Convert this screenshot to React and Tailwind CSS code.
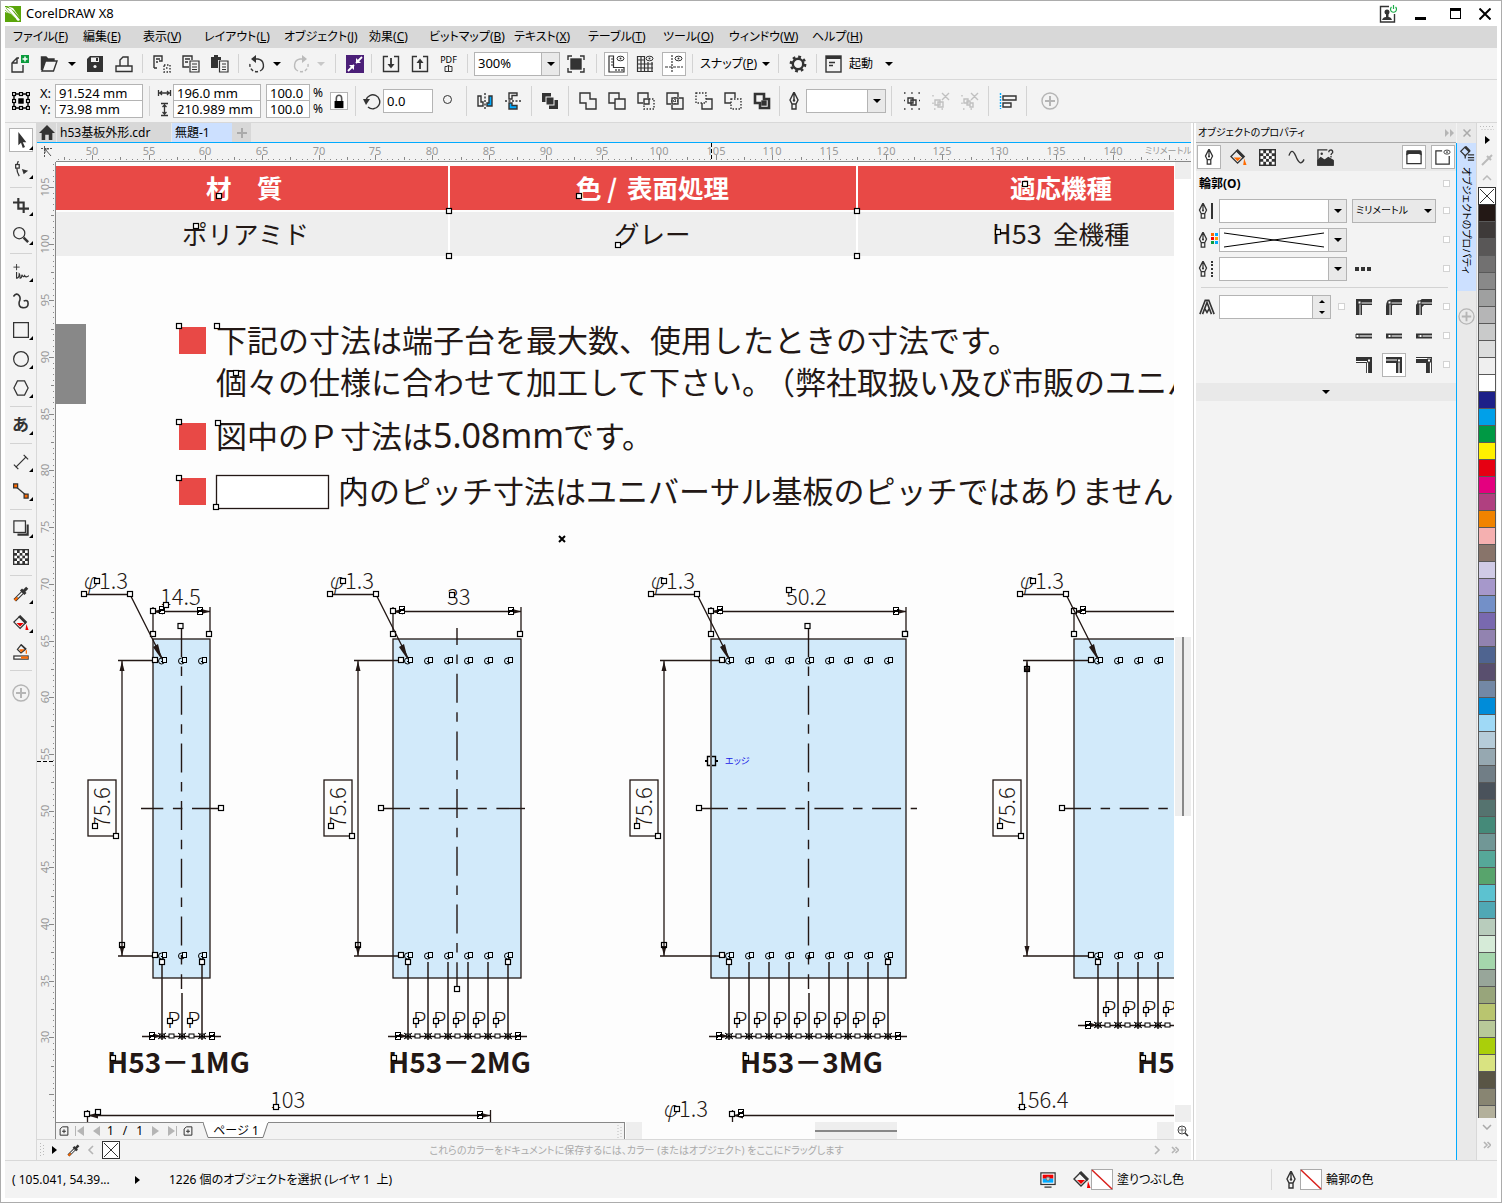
import React from 'react';
import { clsx } from 'clsx';

/* ---------- icons, all on an 18 x 18 grid ---------- */

const Svg = ({ children, className = 'size-[18px]' }) => (
  <svg
    viewBox="0 0 18 18"
    className={clsx('shrink-0', className)}
    fill="none"
    stroke="#333"
    strokeWidth="1.4"
    aria-hidden="true"
  >
    {children}
  </svg>
);

const nib = (
  <>
    <path d="M9 0 L5 8 L7 12 H11 L13 8 Z M9 1 V8 M7 12 V17 H11 V12" />
    <circle cx="9" cy="8.5" r="1.2" fill="#333" stroke="none" />
  </>
);

const eye = (
  <>
    <ellipse cx="13.5" cy="3.5" rx="3.5" ry="2.3" strokeWidth="1" />
    <circle cx="13.5" cy="3.5" r="1" fill="#333" stroke="none" />
  </>
);

const checker = (
  <>
    <rect x="0" y="0" width="18" height="18" fill="#333" stroke="none" />
    {[0, 1, 2, 3, 4].map((r) =>
      [0, 1, 2, 3, 4].map((c) =>
        (r + c) % 2 === 0 ? (
          <rect key={`${r}-${c}`} x={1.5 + c * 3} y={1.5 + r * 3} width="3" height="3" fill="#fff" stroke="none" />
        ) : null
      )
    )}
  </>
);

const bucket = (color) => (
  <>
    <path d="M7 2 L14 9 L8 15 L1 8 Z" />
    <path d="M7 1 L15 9" strokeWidth="3" />
    <path d="M4 9 H12 L8 13 Z" fill={color} stroke="none" />
    <path d="M15 10 L17.5 17 H14 Z" fill={color} stroke="none" />
  </>
);

const icons = {
  newDoc: (
    <>
      <path d="M8 3 H6 L1 8 V17 H12 V10 M6 3 V8 H1" />
      <rect x="10" y="0" width="8" height="8" fill="#0a9b3c" stroke="none" />
      <path d="M14 1.5 V6.5 M11.5 4 H16.5" stroke="#fff" />
    </>
  ),
  open: (
    <>
      <path d="M1.5 15 V2 H6 L8 4 H14 V6" fill="#333" />
      <path d="M2 16 L5.5 6 H17 L13.5 16 Z" fill="#f3f3f3" />
    </>
  ),
  save: (
    <>
      <path d="M1 4 L4 1 H17 V17 H1 Z" fill="#333" stroke="none" />
      <rect x="5" y="2.5" width="8" height="4.5" fill="#f3f3f3" stroke="none" />
      <rect x="10" y="3" width="2" height="3" fill="#333" stroke="none" />
      <circle cx="9" cy="11.5" r="1.6" fill="#f3f3f3" stroke="none" />
    </>
  ),
  print: <path d="M5 11 V5 L8 2 H13 V11 M1 16.5 V11 H17 V16.5 Z" />,
  cut: (
    <>
      <path d="M1 13 V1 H9 V6 H6 M3 4 H7 M3 7 H5 M1 13 H4" />
      <path d="M11 10 H17 V17 H11 Z M13 13 H15" strokeDasharray="1.5 1.5" />
    </>
  ),
  copy: (
    <>
      <path d="M7 12 H1 V1 H10 V5 M3 4 H8 M3 7 H6" />
      <path d="M8 6 H17 V17 H8 Z M10 9 H15 M10 12 H15 M10 14.5 H15" strokeWidth="1.2" />
    </>
  ),
  paste: (
    <>
      <path d="M0 2 H3 V0 H7 V2 H10 V5 H7 V13 H0 Z" fill="#333" stroke="none" />
      <path d="M8.5 6 H17 V17 H8.5 Z M11 9 H15 M11 12 H15 M11 14.5 H15" strokeWidth="1.2" />
    </>
  ),
  undo: (
    <>
      <path d="M6 4 H10 A6.4 6.4 0 0 1 12 16" />
      <path d="M8 0 V8 L3 4 Z" fill="#333" stroke="none" />
      <path d="M10 16.5 A6.5 6.5 0 0 1 2 9" strokeDasharray="3 2" />
    </>
  ),
  redo: (
    <g stroke="#bbb">
      <path d="M12 4 H8 A6.4 6.4 0 0 0 6 16" />
      <path d="M10 0 V8 L15 4 Z" fill="#bbb" stroke="none" />
      <path d="M8 16.5 A6.5 6.5 0 0 0 16 9" strokeDasharray="3 2" />
    </g>
  ),
  connect: (
    <>
      <rect width="18" height="18" fill="#4b1f78" stroke="none" />
      <path d="M16 2 L10 8 M2 16 L8 10" stroke="#fff" strokeWidth="1.8" />
      <path d="M10 3 V8 H15 Z M3 10 H8 V15 Z" fill="#fff" stroke="none" />
    </>
  ),
  importFile: (
    <>
      <path d="M6 1.5 H1.5 V16.5 H16.5 V1.5 H12" />
      <path d="M9 3 V11" strokeWidth="1.8" />
      <path d="M5.5 9 H12.5 L9 13.5 Z" fill="#333" stroke="none" />
    </>
  ),
  exportFile: (
    <>
      <path d="M6 1.5 H1.5 V16.5 H16.5 V1.5 H12" />
      <path d="M9 6 V14" strokeWidth="1.8" />
      <path d="M5.5 8 H12.5 L9 3.5 Z" fill="#333" stroke="none" />
    </>
  ),
  fullScreen: (
    <>
      <rect x="4" y="4" width="10" height="10" fill="#333" />
      <path d="M1 5 V1 H5 M13 1 H17 V5 M17 13 V17 H13 M5 17 H1 V13" />
    </>
  ),
  rulers: (
    <>
      <path d="M2 1 V17 H17 V12.5 H6.500 V1 Z M4 4 H6 M4 7 H6 M4 10 H6 M9 14 V16 M12 14 V16 M15 14 V16" strokeWidth="1.2" />
      {eye}
    </>
  ),
  grid: (
    <>
      <path d="M1.5 1 V17 M5 1 V17 M8.5 1 V17 M12 7 V17 M16 7 V17 M1 1.5 H9 M1 5 H9 M1 9 H17 M1 13 H17 M1 16.5 H17" strokeWidth="1.2" />
      {eye}
    </>
  ),
  guides: (
    <>
      <path d="M7 0 V18" strokeDasharray="2 1" strokeWidth="1.2" />
      <path d="M0 12 H18" strokeDasharray="3 1" strokeWidth="1.2" />
      {eye}
    </>
  ),
  gear: (
    <>
      <circle cx="9" cy="9" r="5.2" strokeWidth="2.4" />
      <circle cx="9" cy="9" r="7.2" strokeWidth="2.4" strokeDasharray="2.8 2.85" />
    </>
  ),
  launch: (
    <>
      <rect x="1" y="1" width="15" height="16" />
      <path d="M1 2.5 H16" strokeWidth="3" />
      <path d="M4 7.5 H10 M4 10.5 H8" />
    </>
  ),
  origin: (
    <>
      {[2, 9, 16].map((x) =>
        [2, 9, 16].map((y) => (
          <rect key={`${x}-${y}`} x={x - 1.5} y={y - 1.5} width="3" height="3" stroke="#000" strokeWidth="1.2" />
        ))
      )}
      <rect x="7" y="7" width="4" height="4" fill="#000" stroke="#000" />
      <path d="M4 2 H7 M11 2 H14 M4 16 H7 M11 16 H14 M2 4 V7 M2 11 V14 M16 4 V7 M16 11 V14" stroke="#000" />
    </>
  ),
  lock: (
    <>
      <rect x="4" y="9" width="10" height="8" fill="#000" stroke="none" />
      <path d="M6 9 V6 A3 3.5 0 0 1 12 6 V9" stroke="#555" strokeWidth="1.8" />
    </>
  ),
  rotate: (
    <>
      <path d="M5 15 A7 7 0 1 0 3 8" />
      <path d="M0 7 H7 L3 13 Z" fill="#333" stroke="none" />
    </>
  ),
  mirrorH: (
    <>
      <path d="M2 4 H5 V10 H7 V14 H2 Z" />
      <path d="M9 1 V17" strokeDasharray="2 1.500" />
      <path d="M13 4 H16 V14 H11 V11 H13 Z" fill="#0af" />
    </>
  ),
  mirrorV: (
    <>
      <path d="M5 1 H13 V3.500 H8 V7 H5 Z" />
      <path d="M1 9 H17" strokeDasharray="2 1.500" />
      <path d="M5 11 H8 V13.500 H13 V17 H5 Z" fill="#0af" />
    </>
  ),
  order: (
    <>
      <rect x="1" y="1" width="9" height="9" fill="#333" stroke="none" />
      <rect x="8" y="8" width="9" height="9" fill="#333" stroke="none" />
      <rect x="5" y="5" width="8" height="8" fill="#333" stroke="#f3f3f3" strokeWidth="1" />
    </>
  ),
  weld: <path d="M1 1 H11 V7 H17 V17 H7 V11 H1 Z" />,
  trim: <path d="M11 7 V1 H1 V11 H7 M7 7 H17 V17 H7 Z" />,
  intersect: (
    <>
      <path d="M11 6 V1 H1 V11 H6 M7 7 H12 V12 H7 Z" />
      <path d="M12 7 H17 V17 H7 V12" strokeDasharray="1.5 1.5" />
    </>
  ),
  simplify: (
    <>
      <path d="M12 5 V1 H1 V12 H5 M13 6 H17 V17 H6 V13" />
      <rect x="6" y="6" width="6" height="6" />
      <path d="M9 5 V12 M5 9 H12" strokeDasharray="1 1" />
    </>
  ),
  frontMinus: (
    <>
      <path d="M11 7 H17 V17 H7 V11" />
      <path d="M1 1 H11 V11 H1 Z" strokeDasharray="1.5 1.5" />
    </>
  ),
  backMinus: (
    <>
      <path d="M7 11 H1 V1 H11 V6" />
      <path d="M7 7 H17 V17 H7 Z" strokeDasharray="1.5 1.5" />
    </>
  ),
  boundary: (
    <>
      <path d="M2 2 H11 V7 H16 V16 H7 V11 H2 Z" strokeWidth="2.6" />
      <rect x="9" y="9" width="4" height="4" fill="#333" />
    </>
  ),
  nib,
  group: (
    <>
      <path d="M5 6 H10 V11 H5 Z M8 8 H13 V13 H8 Z" />
      <path d="M1 1 H17 M1 17 H17 M1 8.5 H2 M16 8.5 H17" strokeDasharray="1.5 5.7" />
    </>
  ),
  ungroup: (
    <g stroke="#c0c0c0">
      <path d="M3 8 H8 V13 H3 Z M6 10 H11 V15 H6 Z M10 1 L17 8 M17 1 L10 8" />
      <path d="M1 3 V17 H17" strokeDasharray="1.5 6" />
    </g>
  ),
  ungroupAll: (
    <g stroke="#c0c0c0">
      <path d="M3 7 H7 V11 H3 Z M6 9 H9 V13 H6 Z M9 11 H12 V15 H9 Z M10 1 L17 8 M17 1 L10 8" />
      <path d="M1 3 V17 H17" strokeDasharray="1.5 6" />
    </g>
  ),
  align: (
    <>
      <path d="M1.5 1 V17" stroke="#0af" strokeDasharray="2 1" />
      <path d="M4 4 H17 V8 H4 Z M4 11 H12 V15 H4 Z" />
    </>
  ),
  plus: (
    <g stroke="#b5b5b5">
      <circle cx="9" cy="9" r="8" />
      <path d="M9 4 V14 M4 9 H14" strokeWidth="2" />
    </g>
  ),
  pick: <path d="M6 0 V15 L9 12 L11 18 L13.500 17 L11 11.500 H15 Z" fill="#333" stroke="none" />,
  shape: (
    <>
      <path d="M6 0 Q2 8 7 17" />
      <rect x="3" y="4" width="4" height="4" fill="#fff" />
      <path d="M10 9 L17 11 L12 15 Z" fill="#333" stroke="none" />
    </>
  ),
  crop: <path d="M0 5 H12 V17 M6 0 V12 H18" strokeWidth="2.4" />,
  zoom: (
    <>
      <circle cx="7" cy="7" r="6.3" />
      <path d="M12 12 L17 17" strokeWidth="2.8" />
    </>
  ),
  freehand: (
    <>
      <path d="M4 0 V7 M0.5 3.5 H7.500" strokeWidth="1" />
      <path d="M4 9 V16 Q7 16 7 11 Q8 12 8 16 Q10 16 10 12 Q12 16 13 13 Q15 16 18 13" strokeWidth="1.3" />
    </>
  ),
  artistic: <path d="M0.5 4 Q4 -1 7 3 Q9 6 7 10 Q6 16 11 16.5 Q17 17 17 12 Q17 7 12 9" strokeWidth="1.8" />,
  rect: <rect x="0.7" y="0.7" width="16.6" height="16.6" />,
  ellipse: <circle cx="9" cy="9" r="8.3" />,
  polygon: <path d="M1 9 L5 1 H13 L17 9 L13 17 H5 Z" />,
  dimension: <path d="M3 15 L15 3 M1 12 L6 17 M12 1 L17 6" />,
  connector: (
    <>
      <path d="M3 4 L15 14" />
      <rect x="0.7" y="1" width="4.5" height="4.5" fill="#ff6a00" />
      <rect x="12.5" y="12.5" width="4.5" height="4.5" fill="#ff6a00" />
    </>
  ),
  shadow: (
    <>
      <path d="M5 16.5 H16.5 V5" strokeWidth="2.4" />
      <rect x="1" y="1" width="13" height="13" fill="#f3f3f3" />
    </>
  ),
  checker,
  eyedropper: (
    <>
      <path d="M2 16 L11 7" strokeWidth="4" />
      <path d="M5 13 L11 7" stroke="#fff" strokeWidth="1.6" />
      <path d="M2 16 L5 13" stroke="#ff6a00" strokeWidth="2.4" />
      <path d="M9 4 L14 9 M12 6 L16 2" strokeWidth="3.4" />
    </>
  ),
  fill: bucket('#f00000'),
  fillOrange: bucket('#ff6a00'),
  fillBar: (
    <>
      <path d="M9 1 L14 6 L9 10 L5 6 Z M9 0.5 L15 6" />
      <path d="M7 6 H13 L9 9.5 Z" fill="#ff6a00" stroke="none" />
      <path d="M15 7 V11" stroke="#ff6a00" />
      <rect x="1" y="13.5" width="16" height="3.5" fill="#fff" />
      <rect x="9" y="14" width="8" height="2.5" fill="#ff6a00" stroke="none" />
    </>
  ),
  wave: <path d="M1 7 Q4 -2 8 7 Q13 20 17 11" />,
  bitmap: (
    <>
      <path d="M11 1 H1 V17 H17 V12" />
      <path d="M1 17 V12 L4 9 L8 12 L12 9 L17 12 V17 Z" fill="#333" />
      <circle cx="5" cy="5" r="1.3" fill="#333" stroke="none" />
      <path d="M12.5 3.5 Q12.5 1 15 1 Q17 1.5 16.5 4 Q15 5 14.8 6.5 M14.8 7.500 V9" />
    </>
  ),
  panelTab: (
    <>
      <path d="M1 5 V16.5 H17 V5" />
      <path d="M1 6 V3 Q1 2 2 2 H16 Q17 2 17 3 V6 L14.5 5 H3.5 Z" fill="#333" />
    </>
  ),
  panelEye: (
    <>
      <path d="M8 2 H1 V17 H16 V8" />
      {eye}
    </>
  ),
  user: (
    <>
      <path d="M10 1.5 H1.5 V17 H15.5 V9" />
      <circle cx="8" cy="7" r="2.5" fill="#333" stroke="none" />
      <path d="M3 15 Q4 12 7 12 V9 H9.5 V12 Q12 12 13 15 Z" fill="#333" stroke="none" />
      <path d="M12.5 2 A3 3 0 1 0 16.5 2 M14.5 0 V4" stroke="#1fae4b" strokeWidth="1.2" />
    </>
  ),
  monitor: (
    <>
      <rect x="1" y="1" width="16" height="13" fill="#fff" />
      <rect x="3" y="3" width="12" height="4.5" fill="#f00000" stroke="none" />
      <rect x="3" y="7.5" width="12" height="4.5" fill="#0af" stroke="none" />
      <circle cx="9" cy="7.5" r="2" fill="#ccc" stroke="#777" strokeWidth="1" />
      <path d="M5 17 H13" />
    </>
  ),
  navZoom: (
    <>
      <circle cx="7.5" cy="7.5" r="6" />
      <path d="M7.5 3.5 V11.5 M3.5 7.5 H11.5" strokeDasharray="2 1" />
      <path d="M12 12 L16.5 16.5" strokeWidth="2.5" />
    </>
  ),
  home: <path d="M9 0 L18 9 H15 V17 H11 V11 H7 V17 H3 V9 H0 Z" fill="#333" stroke="none" />,
  pageAdd: <path d="M6 1.5 H16 V16.5 H2 V5.5 Z M9 6 V13 M5.5 9.5 H12.5" strokeWidth="1.8" />,
  miter: <path d="M1 17 L7 1.5 H11 L17 17 M4 17 L9 4 L14 17 M6 10 L9 15 L12 10" strokeWidth="1.8" />,
};

const Icon = ({ name, className }) => <Svg className={className}>{icons[name]}</Svg>;

const Corner = ({ kind }) => (
  <Svg>
    <path
      d={kind === 'miter' ? 'M4 17 V4 H17' : kind === 'round' ? 'M4 17 V8 Q4 4 8 4 H17' : 'M4 17 V8 L8 4 H17'}
      strokeWidth="6"
    />
    <path d="M5 17 V5 H17" stroke="#f3f3f3" strokeWidth="1" />
    <rect x="3" y="3" width="3" height="3" fill="#fff" strokeWidth="1" />
  </Svg>
);

const Cap = ({ x }) => (
  <Svg>
    <path d="M1 9 H17" strokeWidth="5" />
    <path d="M3 9 H17" stroke="#f3f3f3" strokeWidth="1.2" />
    <rect x={x} y="7.5" width="3" height="3" fill="#fff" strokeWidth="1" />
  </Svg>
);

const Position = ({ inset }) => (
  <Svg>
    <path d="M1 4 H14 V17" strokeWidth="6" />
    <path d={inset} stroke="#fff" strokeWidth="1.2" />
    <rect x="12.5" y="3" width="3" height="3" fill="#fff" strokeWidth="1" />
  </Svg>
);

const Caret = ({ className = 'text-black' }) => (
  <svg viewBox="0 0 8 4" className={clsx('h-1 w-2 shrink-0 fill-current', className)} aria-hidden="true">
    <path d="M0 0 H8 L4 4 Z" />
  </svg>
);

const RightArrow = ({ className }) => (
  <svg viewBox="0 0 5 8" className={clsx('h-2 w-[5px] shrink-0 fill-black', className)} aria-hidden="true">
    <path d="M0 0 V8 L5 4 Z" />
  </svg>
);

const Separator = ({ className = 'w-[9px]' }) => (
  <div className={clsx('flex shrink-0 justify-center self-stretch py-1.5', className)}>
    <div className="w-px bg-[#d3d3d3]" />
  </div>
);

const Tool = ({ name, label, active, width = 'w-[29px]' }) => (
  <button type="button" aria-label={label} className={clsx('flex h-6 shrink-0 items-center justify-center', width)}>
    {active ? (
      <span className="flex size-6 items-center justify-center border border-[#b4b4b4] bg-white">
        <Icon name={name} />
      </span>
    ) : (
      <Icon name={name} />
    )}
  </button>
);

const ComboBox = ({ label, value = '', className, children }) => (
  <div className={clsx('flex h-6 shrink-0 border border-[#b4b4b4] bg-white', className)}>
    {children || <input aria-label={label} defaultValue={value} className="min-w-0 flex-1 px-[3px] text-[13px] outline-none" />}
    <button type="button" aria-label={`${label} ▼`} className="flex w-[18px] items-center justify-center border-l border-[#b4b4b4] bg-[#e9e9e9]">
      <Caret />
    </button>
  </div>
);

/* ---------- title, menus, toolbars ---------- */

const TitleBar = () => (
  <header className="flex h-[25px] shrink-0 items-center bg-white pr-1.5">
    <svg viewBox="0 0 16 16" className="size-4" aria-hidden="true">
      <rect width="16" height="16" fill="#5aa50a" />
      <path d="M0 1 L6 3 L15 14 L13 15 L6 8 L0 6 Z M2 0 L8 2 L15 12 L9 5 Z" fill="#fff" />
      <path d="M1 2 L11 13 M0 4 L9 12" stroke="#5aa50a" strokeWidth="0.7" />
    </svg>
    <h1 className="ml-[5px] flex-1 text-[13px]">CorelDRAW X8</h1>
    <button type="button" aria-label="アカウント" className="mr-[18px]">
      <Icon name="user" />
    </button>
    <button type="button" aria-label="最小化" className="mr-[24px] flex h-3 w-[11px] items-end">
      <span className="h-[3px] w-full bg-black" />
    </button>
    <button type="button" aria-label="最大化" className="mr-[18px] h-[11px] w-[11px] border border-t-[3px] border-black" />
    <button type="button" aria-label="閉じる">
      <svg viewBox="0 0 12 12" className="size-3" stroke="#000" strokeWidth="2" aria-hidden="true">
        <path d="M0.5 0.5 L11.5 11.5 M11.5 0.5 L0.5 11.5" />
      </svg>
    </button>
  </header>
);

const menus = [
  { text: 'ファイル', hotkey: 'F', width: 'w-[70px]' },
  { text: '編集', hotkey: 'E', width: 'w-[60px]' },
  { text: '表示', hotkey: 'V', width: 'w-[61px]' },
  { text: 'レイアウト', hotkey: 'L', width: 'w-[80px]' },
  { text: 'オブジェクト', hotkey: 'J', width: 'w-[85px]' },
  { text: '効果', hotkey: 'C', width: 'w-[60px]' },
  { text: 'ビットマップ', hotkey: 'B', width: 'w-[85px]' },
  { text: 'テキスト', hotkey: 'X', width: 'w-[74px]' },
  { text: 'テーブル', hotkey: 'T', width: 'w-[75px]' },
  { text: 'ツール', hotkey: 'O', width: 'w-[66px]' },
  { text: 'ウィンドウ', hotkey: 'W', width: 'w-[83px]' },
  { text: 'ヘルプ', hotkey: 'H', width: 'w-[60px]' },
];

const MenuBar = () => (
  <nav className="flex h-[22px] shrink-0 items-center bg-[#d8d8d8] pl-2 text-xs">
    {menus.map((menu) => (
      <button key={menu.hotkey} type="button" className={clsx('shrink-0 text-left whitespace-nowrap', menu.width)}>
        {menu.text}(<span className="underline">{menu.hotkey}</span>)
      </button>
    ))}
  </nav>
);

const StandardBar = () => (
  <div className="flex h-8 shrink-0 items-center border-b border-[#d8d8d8]">
    <Tool name="newDoc" label="新規" />
    <Tool name="open" label="開く" />
    <span className="flex w-[17px] justify-center"><Caret /></span>
    <Tool name="save" label="保存" />
    <Tool name="print" label="印刷" />
    <Separator />
    <Tool name="cut" label="切り取り" />
    <Tool name="copy" label="コピー" />
    <Tool name="paste" label="貼り付け" />
    <Separator />
    <Tool name="undo" label="元に戻す" width="w-7" />
    <span className="flex w-3 justify-center"><Caret /></span>
    <Tool name="redo" label="やり直し" width="ml-1 w-7" />
    <span className="flex w-3 justify-center"><Caret className="text-[#c8c8c8]" /></span>
    <Separator className="w-4" />
    <Tool name="connect" label="コンテンツの検索" width="w-6" />
    <Separator />
    <Tool name="importFile" label="インポート" />
    <Tool name="exportFile" label="エクスポート" />
    <button type="button" className="flex w-[29px] flex-col items-center text-[9px] leading-[9px]">
      PDF
      <svg viewBox="0 0 9 8" className="h-2 w-[9px]" fill="none" stroke="#333" aria-hidden="true">
        <path d="M3 2.5 H1 V7.5 H8 V2.5 H6 M4.5 7 V1 M2.5 3 L4.5 1 L6.5 3" />
      </svg>
    </button>
    <Separator />
    <ComboBox label="ズームレベル" value="300%" className="ml-0.5 w-[86px]" />
    <Tool name="fullScreen" label="フルスクリーン" width="w-8" />
    <Separator />
    <Tool name="rulers" label="定規" active />
    <Tool name="grid" label="グリッド" />
    <Tool name="guides" label="ガイドライン" active />
    <Separator />
    <button type="button" className="flex w-[77px] shrink-0 items-center justify-between pr-1 pl-[3px] text-xs whitespace-nowrap">
      <span>スナップ(<span className="underline">P</span>)</span>
      <Caret />
    </button>
    <Separator />
    <Tool name="gear" label="オプション" />
    <Separator />
    <button type="button" className="flex shrink-0 items-center pl-1 text-xs">
      <Icon name="launch" />
      <span className="mr-3 ml-1.5">起動</span>
      <Caret />
    </button>
  </div>
);

const Pair = ({ labels, values, className }) => (
  <div className={clsx('flex shrink-0 flex-col divide-y divide-[#b4b4b4] border border-[#b4b4b4]', className)}>
    {values.map((value, i) => (
      <input
        key={labels[i]}
        aria-label={labels[i]}
        defaultValue={value}
        className="h-4 w-full min-w-0 bg-white px-[3px] text-[13px] leading-4 outline-none"
      />
    ))}
  </div>
);

const PropertyBar = () => (
  <div className="flex h-[43px] shrink-0 items-center border-b border-[#d8d8d8]">
    <Tool name="origin" label="オブジェクトの基準点" width="w-8" />
    <div className="ml-[3px] w-[15px] text-[13px] leading-4">
      <div>X:</div>
      <div>Y:</div>
    </div>
    <Pair labels={['X 位置', 'Y 位置']} values={['91.524 mm', '73.98 mm']} className="w-[88px]" />
    <Separator className="w-[13px]" />
    <svg viewBox="0 0 16 32" className="mr-px h-8 w-4" fill="none" stroke="#333" aria-hidden="true">
      <path d="M2.5 5 V11 M14.5 5 V11 M3 8 H14 M6 6 L4 8 L6 10 M11 6 L13 8 L11 10" strokeWidth="1.300" />
      <path d="M5 18.5 H12 M5 30.5 H12 M8.5 19 V30 M6.5 22 L8.5 20 L10.5 22 M6.5 27 L8.5 29 L10.5 27" strokeWidth="1.300" />
    </svg>
    <Pair labels={['幅', '高さ']} values={['196.0 mm', '210.989 mm']} className="w-[88px]" />
    <Pair labels={['水平比率', '垂直比率']} values={['100.0', '100.0']} className="ml-[5px] w-[44px]" />
    <div className="mx-[3px] w-3 text-[12px] leading-4">
      <div>%</div>
      <div>%</div>
    </div>
    <button type="button" aria-label="比率をロック" className="ml-0.5 flex size-[18px] items-center justify-center border border-[#b4b4b4] bg-white">
      <Icon name="lock" className="size-4" />
    </button>
    <Separator className="w-[15px]" />
    <label htmlFor="angle" className="mr-0.5 flex">
      <Icon name="rotate" />
    </label>
    <input id="angle" aria-label="回転角度" defaultValue="0.0" className="h-6 w-[50px] shrink-0 border border-[#b4b4b4] bg-white px-[3px] text-[13px] outline-none" />
    <span className="mx-2.5 mb-1 size-[9px] rounded-full border border-[#333]" />
    <Separator />
    <div className="flex w-[56px] shrink-0">
      <Tool name="mirrorH" label="左右に反転" width="w-7" />
      <Tool name="mirrorV" label="上下に反転" width="w-7" />
    </div>
    <Separator />
    <Tool name="order" label="順序" width="w-7" />
    <Separator />
    <Tool name="weld" label="ウェルド" />
    <Tool name="trim" label="トリム" />
    <Tool name="intersect" label="インターセクト" />
    <Tool name="simplify" label="シンプリファイ" />
    <Tool name="frontMinus" label="前面マイナス背面" />
    <Tool name="backMinus" label="背面マイナス前面" />
    <Tool name="boundary" label="境界" />
    <Separator className="w-1.5" />
    <Tool name="nib" label="輪郭の太さ" width="w-6" />
    <ComboBox label="輪郭の太さ" className="w-[80px]" />
    <Separator className="w-[11px]" />
    <Tool name="group" label="グループ化" />
    <Tool name="ungroup" label="グループ解除" />
    <Tool name="ungroupAll" label="すべてのグループを解除" />
    <Separator />
    <Tool name="align" label="整列と配置" />
    <Separator />
    <Tool name="plus" label="カスタマイズ" width="ml-1 w-[29px]" />
  </div>
);

/* ---------- toolbox ---------- */

const toolGroups = [
  [['pick', 'オブジェクトの選択'], ['shape', '整形']],
  [['crop', '切り抜き'], ['zoom', 'ズーム']],
  [['freehand', 'フリーハンド'], ['artistic', 'アートメディア'], ['rect', '長方形'], ['ellipse', '楕円形'], ['polygon', '多角形']],
  [['text', 'テキスト']],
  [['dimension', '寸法'], ['connector', 'コネクタ']],
  [['shadow', 'ドロップシャドウ'], ['checker', '透明度']],
  [['eyedropper', 'カラースポイト'], ['fill', '塗りつぶし'], ['fillBar', 'スマート塗りつぶし']],
];
const noFlyout = ['artistic', 'checker', 'fillBar'];

const Toolbox = () => (
  <aside className="flex w-8 shrink-0 flex-col items-center border-r border-[#d8d8d8] pt-0.5">
    {toolGroups.map((group) => (
      <React.Fragment key={group[0][0]}>
        {group.map(([name, label]) => (
          <button
            key={name}
            type="button"
            aria-label={label}
            className="relative flex h-[29px] w-6 shrink-0 items-center justify-center"
          >
            <span className={clsx('flex size-6 items-center justify-center', name === 'pick' && 'border border-[#b4b4b4] bg-white')}>
              {name === 'text' ? <span className="text-[17px] leading-none font-bold text-[#333]">あ</span> : <Icon name={name} className="size-4" />}
            </span>
            {!noFlyout.includes(name) && (
              <svg viewBox="0 0 4 4" className="absolute right-0 bottom-1 size-1" aria-hidden="true">
                <path d="M4 0 V4 H0 Z" />
              </svg>
            )}
          </button>
        ))}
        <div className="flex h-2 w-[22px] shrink-0 flex-col justify-center">
          <div className="h-px bg-[#d3d3d3]" />
        </div>
      </React.Fragment>
    ))}
    <button type="button" aria-label="カスタマイズ" className="mt-2.5">
      <Icon name="plus" />
    </button>
  </aside>
);

/* ---------- rulers ---------- */

const PX_PER_MM = 11.339;

const ticks = (from, to) => {
  const list = [];
  for (let half = from * 2; half <= to * 2; half += 1) list.push(half / 2);
  return list;
};

const HorizontalRuler = () => (
  <svg className="h-[19px] min-w-0 flex-1 border-b border-[#888]" aria-hidden="true">
    {ticks(47, 148).map((mm) => {
      const x = Math.round(36 + (mm - 50) * PX_PER_MM);
      const height = mm % 5 === 0 ? 5 : mm % 2.5 === 0 ? 3 : 1;
      return (
        <React.Fragment key={mm}>
          <rect x={x} y={17 - height} width="1" height={height} fill="#888" />
          {mm % 5 === 0 && mm < 145 && (
            <text x={x} y="12" textAnchor="middle" fontSize="11" fill="#999">{mm}</text>
          )}
        </React.Fragment>
      );
    })}
    <text x="1089" y="11" fontSize="9" fill="#999">ミリメートル</text>
    <path d="M655.5 0 V18" stroke="#000" strokeDasharray="4 2" />
  </svg>
);

const VerticalRuler = () => (
  <svg className="h-full w-[19px] shrink-0 border-r border-[#888]" aria-hidden="true">
    {ticks(23, 107).map((mm) => {
      const y = Math.round(25 + (105 - mm) * PX_PER_MM);
      const width = mm % 5 === 0 ? 5 : mm % 2.5 === 0 ? 3 : 1;
      return (
        <React.Fragment key={mm}>
          <rect x={17 - width} y={y} width={width} height="1" fill="#888" />
          {mm % 5 === 0 && mm > 25 && (
            <text x="12" y={y} transform={`rotate(-90 12 ${y})`} textAnchor="middle" fontSize="11" fill="#999">{mm}</text>
          )}
        </React.Fragment>
      );
    })}
    <path d="M0 599.5 H18" stroke="#000" strokeDasharray="4 2" />
  </svg>
);

/* ---------- drawing ---------- */

const INK = '#231815';

const Handle = ({ x, y, fill = '#fff' }) => (
  <rect x={x - 2.5} y={y - 2.5} width="5" height="5" fill={fill} stroke="#000" strokeWidth="1.2" />
);

const Hole = ({ x, y }) => (
  <g stroke="#000" fill="none" strokeWidth="1">
    <circle cx={x - 0.5} cy={y + 1} r="3" />
    <path d={`M${x - 1} ${y + 2} L${x + 2} ${y - 1}`} />
    <rect x={x + 0.5} y={y - 2.5} width="4" height="5" fill="#e8f4fc" />
    <path d={`M${x + 0.5} ${y - 2} V${y + 3}`} stroke="#000" />
  </g>
);

// small knot of nodes that sits on an arrow head
const Knot = ({ x, y }) => (
  <g stroke="#000" fill="#fff" strokeWidth="1">
    <rect x={x - 2.5} y={y - 3.5} width="5" height="3" />
    <rect x={x - 2.5} y={y + 0.5} width="5" height="3" />
    <path d={`M${x - 3} ${y + 3} L${x + 3} ${y - 3}`} />
  </g>
);

const Thin = ({ children, ...rest }) => (
  <text fontSize="22" fontWeight="300" fill={INK} fontFamily="'Noto Sans CJK JP', 'Open Sans', sans-serif" {...rest}>
    {children}
  </text>
);

const Phi = ({ x, y }) => (
  <>
    <text x={x} y={y} fontSize="22" fontWeight="300" fontStyle="italic" fill={INK} fontFamily="'Open Sans', sans-serif">φ</text>
    <Thin x={x + 15} y={y}>1.3</Thin>
    <Handle x={x + 13} y={y - 8} />
  </>
);

const Board = ({ left, right, holes, pitch = 19.9, first, dimX, phiX, width, widthX, boxX, crossFrom, crossTo, centre, centreOffset = 0, baseY = 1036, label, labelX, topHandle = true }) => {
  const xs = Array.from({ length: holes }, (_, i) => Math.round(first + i * pitch));
  const clipped = right > 1174;
  return (
    <g>
      <rect x={left} y="639" width={right - left} height="339" fill="#d2eafa" stroke={INK} strokeWidth="1.3" />

      {/* width dimension */}
      <path d={`M${left} 607 V634 M${right} 607 V634 M${left} 611.5 H${right}`} stroke={INK} strokeWidth="1.3" />
      <path d={`M${left} 611.5 l10 -3 v6 Z M${right} 611.5 l-10 -3 v6 Z`} fill={INK} />
      <Handle x={left} y={611} />
      <Knot x={left + 9} y={610} />
      {!clipped && <Knot x={right - 10} y={611} />}
      <Handle x={left} y={634} />
      {!clipped && <Handle x={right - 1} y={634} />}
      {width && <Thin x={widthX} y="605">{width}</Thin>}

      {/* hole leader */}
      <path d={`M${phiX} 594.5 H${phiX + 46} L${first} 658`} fill="none" stroke={INK} strokeWidth="1.3" />
      <path d={`M${first} 660 L${first - 9} 647 L${first - 4} 644 Z`} fill={INK} />
      <Phi x={phiX} y={589} />
      <Handle x={phiX} y={594} />
      <Handle x={phiX + 46} y={594} />

      {/* height dimension */}
      <path d={`M${dimX - 4} 660.5 H${first - 7} M${dimX - 4} 956 H${first - 7} M${dimX} 661 V956`} stroke={INK} strokeWidth="1.3" />
      <path d={`M${dimX} 661 l-2.5 10 h5 Z M${dimX} 956 l-2.5 -10 h5 Z`} fill={INK} />
      <Handle x={dimX} y={clipped ? 669 : 945} fill="none" />
      <rect x={boxX} y="780" width="28" height="56" fill="none" stroke={INK} strokeWidth="1.3" />
      <Thin x={boxX + 22} y="828" transform={`rotate(-90 ${boxX + 22} 828)`}>75.6</Thin>
      <Handle x={boxX + 7} y={826} />
      <Handle x={boxX + 28} y={836} />

      {/* centre lines */}
      {centre && (
        <path d={`M${centre} 628 V989`} stroke={INK} strokeWidth="1.4" strokeDasharray="29 9.6 9.5 9.6" strokeDashoffset={centreOffset} />
      )}
      {centre && <Handle x={topHandle ? centre - 1 : centre} y={topHandle ? 626 : 989} />}
      <path d={`M${crossFrom} 808.5 H${crossTo}`} stroke={INK} strokeWidth="1.4" strokeDasharray="29 9.6 9.5 9.6" />
      <Handle x={crossFrom} y={808} />

      {/* holes */}
      <Handle x={first - 7} y={660} />
      <Handle x={first - 7} y={955} />
      {xs.map((x) => (
        <React.Fragment key={x}>
          <Hole x={x} y={660} />
          <Hole x={x} y={955} />
        </React.Fragment>
      ))}

      {/* pitch dimension */}
      <path d={`M${first - 20} ${baseY + 0.5} H${clipped ? right : xs[holes - 1] + 19}`} stroke={INK} strokeWidth="1.3" />
      {xs.map((x, i) => (
        <g key={x}>
          <path d={`M${x} ${x === Math.round(centre) ? 993 : 962} V${baseY + 4}`} stroke={INK} strokeWidth="1.5" />
          <path d={`M${x - 4} ${baseY - 3} L${x + 4} ${baseY + 3} M${x + 4} ${baseY - 3} L${x - 4} ${baseY + 3}`} stroke="#000" />
          <rect x={x - 2.5} y={baseY - 2} width="5" height="4" fill="none" stroke="#000" strokeWidth="0.8" />
          {(clipped || i < holes - 1) && (
            <>
              <Thin x={x + 5} y={baseY - 8}>P</Thin>
              <Handle x={x + 8} y={baseY - 15} />
              <rect x={x + 7} y={baseY - 2} width="5" height="4" fill="#fff" stroke="#000" />
            </>
          )}
        </g>
      ))}
      <path d={`M${first - 1} ${baseY} l-9 -3 v6 Z`} fill={INK} />
      <Knot x={first - 10} y={baseY} />
      {!clipped && <Knot x={xs[holes - 1] + 10} y={baseY} />}
      <Handle x={first} y={962} />
      {!clipped && <Handle x={xs[holes - 1]} y={962} />}

      <text x={labelX} y="1073" fontSize="28" fontWeight="700" fill={INK}>{label}</text>
      <Handle x={labelX + 6} y={1058} />
    </g>
  );
};

const boards = [
  { left: 153, right: 210, holes: 3, first: 162, dimX: 122, phiX: 84, width: '14.5', widthX: 160, boxX: 88, crossFrom: 221, crossTo: 141, centre: 181.5, label: 'H53－1MG', labelX: 107 },
  { left: 393, right: 521, holes: 6, first: 408, dimX: 358, phiX: 330, width: '33', widthX: 447, boxX: 324, crossFrom: 381, crossTo: 525, centre: 457, centreOffset: 12, topHandle: false, label: 'H53－2MG', labelX: 388 },
  { left: 711, right: 906, holes: 9, first: 729, dimX: 664, phiX: 651, width: '50.2', widthX: 786, boxX: 630, crossFrom: 699, crossTo: 917, centre: 808.5, label: 'H53－3MG', labelX: 740 },
  { left: 1074, right: 1260, holes: 4, first: 1098, dimX: 1027, phiX: 1020, boxX: 993, crossFrom: 1062, crossTo: 1174, baseY: 1025, label: 'H53－4MG', labelX: 1137 },
];

const handles = [
  [219, 196], [579, 196], [1025, 184], [196, 226], [618, 245], [998, 232], [449, 211], [449, 256], [857, 211], [857, 256],
  [179, 326], [217, 326], [236, 373], [179, 422], [218, 423], [179, 478], [216, 507], [350, 481], [166, 605], [452, 595],
  [789, 590], [905, 634], [87, 1114], [98, 1112], [276, 1107], [732, 1114], [1022, 1107],
];

// The drawing keeps window units, so it is shifted by the canvas origin.
const Drawing = () => (
  <svg className="block h-full min-w-0 flex-1 bg-[#fdfdfd] font-['Noto_Sans_CJK_JP',sans-serif] [font-feature-settings:normal]">
    <g transform="translate(-56 -162)">
      <rect x="56" y="166" width="1200" height="44" fill="#e84946" />
      <rect x="56" y="212" width="1200" height="44" fill="#eee" />
      <path d="M449 166 V256 M857 166 V256" stroke="#fff" strokeWidth="2" />
      <g fontSize="25.5" fontWeight="700" fill="#fff">
        <text x="206" y="198">材　質</text>
        <text x="576" y="198">色 /</text>
        <text x="627" y="198">表面処理</text>
        <text x="1010" y="198">適応機種</text>
      </g>
      <g fontSize="25.5" fill={INK}>
        <text x="182" y="244">ポリアミド</text>
        <text x="614" y="244">グレー</text>
        <text x="992" y="244" fontSize="27">H53</text>
        <text x="1053" y="244">全機種</text>
      </g>
      <rect x="56" y="324" width="30" height="80" fill="#888" />
      {[327, 423, 478].map((y) => (
        <rect key={y} x="179" y={y} width="27" height="27" fill="#e84946" />
      ))}
      <g fontSize="31" fill={INK}>
        <text x="216" y="352">下記の寸法は端子台を最大数、使用したときの寸法です。</text>
        <text x="216" y="394">個々の仕様に合わせて加工して下さい。</text>
        <text x="764" y="394">（弊社取扱い及び市販のユニバーサル基板</text>
        <text x="216" y="448">図中の</text>
        <text x="308" y="448">Ｐ</text>
        <text x="340" y="448">寸法は</text>
        <text x="433" y="448" fontSize="34" fontFamily="'Noto Sans', sans-serif">5.08mm</text>
        <text x="563" y="448">です。</text>
        <text x="338" y="503">内のピッチ寸法はユニバーサル基板のピッチではありません</text>
      </g>
      <rect x="216.5" y="475.5" width="112" height="33" fill="#fff" stroke={INK} strokeWidth="1.3" />
      <path d="M559 536 L565 542 M565 536 L559 542" stroke="#000" strokeWidth="2" />

      {boards.map((board) => (
        <Board key={board.label} {...board} />
      ))}

      <path d="M87 1115.5 H491 M87.5 1110 V1122 M490.5 1110 V1122 M732 1115.5 H1260 M732.5 1110 V1122" stroke={INK} strokeWidth="1.3" />
      <path d="M88 1115.5 l10 -3 v6 Z M490 1115.5 l-10 -3 v6 Z M733 1115.5 l10 -3 v6 Z" fill={INK} />
      <Thin x="270" y="1108">103</Thin>
      <Thin x="1016" y="1108">156.4</Thin>
      <Phi x={664} y={1117} />
      <Knot x={480} y={1115} />
      <Knot x={741} y={1113} />

      {handles.map(([x, y]) => (
        <Handle key={`${x}-${y}`} x={x} y={y} />
      ))}

      {/* edge snap marker */}
      <path d="M710 756.5 H707.5 V765.5 H710 M712 756.5 H715.5 V765.5 H712" fill="none" stroke="#000" strokeWidth="1.4" />
      <path d="M705 761 H708 M715 761 H718" stroke="#000" strokeWidth="2" />
      <text x="725" y="764" fontSize="9" fill="#1a1ae6" className="[font-feature-settings:'palt']">エッジ</text>
    </g>
  </svg>
);

const DocumentTabs = () => (
  <div className="flex h-5 shrink-0 border-b border-[#00aaff] bg-[#e9e9e9] text-xs">
    <button type="button" aria-label="ようこそ" className="flex w-[19px] items-center justify-center bg-[#d8d8d8]">
      <Icon name="home" className="size-4" />
    </button>
    <button type="button" className="ml-px w-[114px] bg-[#d8d8d8] pl-[3px] text-left whitespace-nowrap">h53基板外形.cdr</button>
    <button type="button" className="ml-px w-[60px] bg-[#cce0ff] pl-[3px] text-left whitespace-nowrap">無題-1</button>
    <button type="button" aria-label="新規ドキュメント" className="flex w-[19px] items-center justify-center bg-[#d8d8d8]">
      <svg viewBox="0 0 12 12" className="size-3" stroke="#aaa" strokeWidth="2" aria-hidden="true">
        <path d="M6 1 V11 M1 6 H11" />
      </svg>
    </button>
  </div>
);

const PageArrow = ({ flip, bar }) => (
  <svg viewBox="0 0 10 10" className={clsx('size-2.5', flip && 'rotate-180')} fill="#b5b5b5" aria-hidden="true">
    <path d="M1 0 V10 L8 5 Z" />
    {bar && <rect x="9" width="1" height="10" />}
  </svg>
);

const PageBar = () => (
  <div className="flex h-[17px] shrink-0">
    <div className="w-[19px] shrink-0 border-r border-[#888]" />
    <div className="flex w-[569px] shrink-0 border-t border-r border-[#888] bg-[#f3f3f3] text-xs leading-4">
      <div className="flex w-[147px] shrink-0 items-center gap-1.5 pl-[3px]">
        <button type="button" aria-label="ページの追加"><Icon name="pageAdd" className="size-2.5" /></button>
        <button type="button" aria-label="最初のページ"><PageArrow flip bar /></button>
        <button type="button" aria-label="前のページ"><PageArrow flip /></button>
        <span className="flex w-9 justify-between"><span>1</span><span>/</span><span>1</span></span>
        <button type="button" aria-label="次のページ" className="ml-0.5"><PageArrow /></button>
        <button type="button" aria-label="最後のページ"><PageArrow bar /></button>
        <button type="button" aria-label="ページの追加 (後)"><Icon name="pageAdd" className="size-2.5" /></button>
      </div>
      <button type="button" className="relative -mt-px h-[17px] w-[66px] shrink-0">
        <svg viewBox="0 0 66 17" className="absolute inset-0 h-full w-full" aria-hidden="true">
          <path d="M0 0.5 L5 15.5 H60 L65 0.5" fill="#fff" stroke="#777" />
          <path d="M1 0 H65" stroke="#fff" strokeWidth="2" />
        </svg>
        <span className="relative">ページ 1</span>
      </button>
      <svg viewBox="0 0 8 16" className="ml-auto h-4 w-2" aria-hidden="true">
        <path d="M2 2 V15 M5 4 V15" stroke="#bbb" strokeDasharray="1 2" />
      </svg>
    </div>
    <div className="flex min-w-0 flex-1 bg-[#fdfdfd]">
      <div className="ml-px w-4 shrink-0 bg-[#eee]" />
      <div className="flex-[173_0_0]" />
      <div className="flex flex-[82_0_0] flex-col justify-center bg-[#eee]">
        <div className="h-0.5 bg-[#888]" />
      </div>
      <div className="flex-[260_0_0]" />
      <div className="w-[17px] shrink-0 bg-[#eee]" />
    </div>
    <button type="button" aria-label="ナビゲータ" className="flex w-[17px] shrink-0 items-center justify-center bg-white">
      <Icon name="navZoom" className="size-3" />
    </button>
  </div>
);

const NoColor = ({ className = 'size-[18px]' }) => (
  <svg viewBox="0 0 18 18" className={clsx('shrink-0', className)} fill="#fff" stroke="#333" aria-hidden="true">
    <rect x="0.5" y="0.5" width="17" height="17" />
    <path d="M2 2 L16 16 M16 2 L2 16" />
  </svg>
);

const Chevron = ({ d, className = 'h-2.5 w-2' }) => (
  <svg viewBox="0 0 8 10" className={clsx('shrink-0', className)} fill="none" stroke="#b5b5b5" strokeWidth="1.6" aria-hidden="true">
    <path d={d} />
  </svg>
);

const ColorTray = () => (
  <div className="flex h-[21px] shrink-0 items-center border-t border-[#d8d8d8] bg-[#f3f3f3] pr-3 pl-0.5 text-[#aaa]">
    <svg viewBox="0 0 6 16" className="h-4 w-1.5" aria-hidden="true">
      <path d="M1.5 1 V15 M4.5 3 V15" stroke="#bbb" strokeDasharray="1 2" />
    </svg>
    <RightArrow className="ml-[7px]" />
    <Icon name="eyedropper" className="ml-2.5 size-[13px]" />
    <Chevron d="M6 1 L2 5 L6 9" className="mx-[7px] h-2.5 w-2" />
    <NoColor />
    <p className="flex-1 text-center text-[10px] whitespace-nowrap">
      これらのカラーをドキュメントに保存するには、カラー (またはオブジェクト) をここにドラッグします
    </p>
    <Chevron d="M2 1 L6 5 L2 9" className="mr-2.5 h-2.5 w-2" />
    <Chevron d="M1 2 L4 5 L1 8 M4.5 2 L7.5 5 L4.5 8" />
  </div>
);

const DocumentArea = () => (
  <main className="flex min-w-0 flex-1 flex-col">
    <DocumentTabs />
    <div className="flex h-[19px] shrink-0">
      <svg viewBox="0 0 19 18" className="h-[18px] w-[19px] shrink-0" fill="none" stroke="#555" aria-hidden="true">
        <path d="M4 5.5 H16 M7.5 3 V14" strokeDasharray="2 1" />
        <path d="M8 6 L14 13 M8 10 V6 H12" />
      </svg>
      <HorizontalRuler />
    </div>
    <div className="flex min-h-0 flex-1">
      <VerticalRuler />
      <Drawing />
      <div className="flex w-[17px] shrink-0 flex-col bg-white pl-px">
        <div className="h-[17px] shrink-0 bg-[#eee]" />
        <div className="flex-[458_0_0]" />
        <div className="flex flex-[179_0_0] justify-center bg-[#eee]">
          <div className="w-0.5 bg-[#888]" />
        </div>
        <div className="flex-[289_0_0]" />
        <div className="h-[17px] shrink-0 bg-[#eee]" />
      </div>
    </div>
    <PageBar />
    <ColorTray />
  </main>
);

/* ---------- object properties docker ---------- */

const Lock = ({ label }) => (
  <input type="checkbox" aria-label={label} className="size-[7px] shrink-0 appearance-none border border-[#d3d3d3] bg-white" />
);

const DockerTab = ({ name, label, active }) => (
  <button
    type="button"
    aria-label={label}
    className={clsx('flex size-6 shrink-0 items-center justify-center', active && 'border border-[#b4b4b4] bg-white')}
  >
    <Icon name={name} className={active ? 'size-4' : 'size-[17px]'} />
  </button>
);

const PropertiesDocker = () => (
  <section className="flex w-[260px] shrink-0 flex-col bg-[#f3f3f3]">
    <div className="flex h-5 shrink-0 items-center justify-between border-b border-[#aaa] bg-[#e9e9e9] pr-0.5 pl-0.5">
      <h2 className="text-[10px]">オブジェクトのプロパティ</h2>
      <svg viewBox="0 0 9 8" className="h-2 w-[9px]" fill="#b5b5b5" aria-hidden="true">
        <path d="M0 0 V8 L4 4 Z M5 0 V8 L9 4 Z" />
      </svg>
    </div>
    <div className="flex h-7 shrink-0 items-center gap-[5px] bg-[#e9e9e9] px-px">
      <DockerTab name="nib" label="輪郭" active />
      <DockerTab name="fillOrange" label="塗りつぶし" />
      <DockerTab name="checker" label="透明度" />
      <DockerTab name="wave" label="曲線" />
      <DockerTab name="bitmap" label="ビットマップ" />
      <div className="ml-auto"><DockerTab name="panelTab" label="スクロールモード" active /></div>
      <DockerTab name="panelEye" label="表示" active />
    </div>
    <div className="flex flex-col pr-1.5 pl-[3px]">
      <div className="flex h-[25px] items-center justify-between">
        <h3 className="text-xs font-bold">輪郭(O)</h3>
        <Lock label="輪郭" />
      </div>
      <div className="flex h-[29px] items-center">
        <Icon name="nib" className="-ml-1 size-4" />
        <span className="mr-1 h-4 w-0.5 bg-[#333]" />
        <ComboBox label="輪郭の太さ" className="ml-0.5 w-[128px]" />
        <div className="relative ml-[5px] flex w-[84px] items-center">
          <select aria-label="単位" className="h-6 w-full appearance-none border border-[#b4b4b4] bg-[#e9e9e9] pl-[3px] text-[10px]">
            <option>ミリメートル</option>
          </select>
          <Caret className="pointer-events-none absolute right-1" />
        </div>
        <div className="ml-auto flex"><Lock label="太さ" /></div>
      </div>
      <div className="flex h-[29px] items-center">
        <Icon name="nib" className="-ml-1 size-4" />
        <svg viewBox="0 0 8 12" className="mb-1 h-3 w-2" aria-hidden="true">
          <path d="M0 1 H3 V4 H0 Z" fill="#ff6a00" />
          <path d="M4 1 H7 V4 H4 Z" fill="#0af" />
          <path d="M0 5 H3 V8 H0 Z" fill="#f00" />
          <path d="M4 5 H7 V8 H4 Z" fill="#ff9a00" />
          <path d="M0 9 H3 V12 H0 Z" fill="#0a9b3c" />
          <path d="M4 9 H7 V12 H4 Z" fill="#0af" />
        </svg>
        <ComboBox label="輪郭の色" className="w-[128px]">
          <svg viewBox="0 0 108 22" preserveAspectRatio="none" className="h-full min-w-0 flex-1" stroke="#000" aria-hidden="true">
            <path d="M4 4 L104 18 M104 4 L4 18" />
          </svg>
        </ComboBox>
        <div className="ml-auto flex"><Lock label="色" /></div>
      </div>
      <div className="flex h-[29px] items-center">
        <Icon name="nib" className="-ml-1 size-4" />
        <span className="mr-1 h-4 border-l-2 border-dotted border-[#333]" />
        <ComboBox label="輪郭のスタイル" className="ml-0.5 w-[128px]" />
        <button type="button" aria-label="スタイルの設定" className="ml-2 flex gap-0.5">
          <span className="size-1 bg-[#333]" />
          <span className="size-1 bg-[#333]" />
          <span className="size-1 bg-[#333]" />
        </button>
        <div className="ml-auto flex"><Lock label="スタイル" /></div>
      </div>
      <hr className="mx-0.5 mt-1 mb-1 border-[#d3d3d3]" />
      <div className="flex h-[29px] items-center">
        <Icon name="miter" className="size-4" />
        <div className="ml-1 flex h-6 w-[112px] shrink-0 border border-[#b4b4b4] bg-white">
          <input aria-label="マイターの制限" className="min-w-0 flex-1 px-1 text-xs outline-none" />
          <button type="button" aria-label="増減" className="flex w-[18px] flex-col items-center justify-between border-l border-[#b4b4b4] bg-[#e9e9e9] py-1">
            <svg viewBox="0 0 6 3" className="h-[3px] w-1.5" aria-hidden="true"><path d="M0 3 H6 L3 0 Z" /></svg>
            <svg viewBox="0 0 6 3" className="h-[3px] w-1.5" aria-hidden="true"><path d="M0 0 H6 L3 3 Z" /></svg>
          </button>
        </div>
        <div className="mr-2.5 ml-[7px] flex"><Lock label="マイター" /></div>
        <div className="flex gap-3">
          <button type="button" aria-label="マイター コーナー"><Corner kind="miter" /></button>
          <button type="button" aria-label="丸コーナー"><Corner kind="round" /></button>
          <button type="button" aria-label="面取りコーナー"><Corner kind="bevel" /></button>
        </div>
        <div className="ml-auto flex"><Lock label="コーナー" /></div>
      </div>
      <div className="flex h-[29px] items-center justify-end">
        <div className="mr-2.5 flex gap-3">
          <button type="button" aria-label="突出なし"><Cap x="1" /></button>
          <button type="button" aria-label="丸型"><Cap x="3" /></button>
          <button type="button" aria-label="突出型"><Cap x="4" /></button>
        </div>
        <Lock label="線端" />
      </div>
      <div className="flex h-[29px] items-center justify-end">
        <div className="mr-2.5 flex items-center gap-[9px]">
          <button type="button" aria-label="輪郭の外側"><Position inset="M1 5.500 H12.500 V17" /></button>
          <button type="button" aria-label="中央揃えの輪郭" className="flex size-6 items-center justify-center border border-[#b4b4b4] bg-white">
            <Position inset="M1 4 H14 V17" />
          </button>
          <button type="button" aria-label="輪郭の内側"><Position inset="M1 2.500 H15.500 V17" /></button>
        </div>
        <Lock label="位置" />
      </div>
    </div>
    <button type="button" aria-label="詳細" className="mt-1 flex h-[18px] shrink-0 items-center justify-center bg-[#e9e9e9]">
      <Caret />
    </button>
  </section>
);

const DockerTabs = () => (
  <div className="flex w-[19px] shrink-0 flex-col bg-[#e9e9e9]">
    <button type="button" aria-label="ドッキングウィンドウを閉じる" className="flex h-5 shrink-0 items-center justify-center">
      <svg viewBox="0 0 8 8" className="size-2" stroke="#aaa" strokeWidth="1.5" aria-hidden="true">
        <path d="M0.5 0.5 L7.5 7.5 M7.5 0.5 L0.5 7.5" />
      </svg>
    </button>
    <button type="button" className="flex h-[148px] shrink-0 flex-col items-center bg-[#cce0ff] pt-[3px]">
      <Svg className="size-4">
        <path d="M7 1 L12 6 L7 11 L2 6 Z" />
        <path d="M7 1 L12 6" strokeWidth="3" />
        <path d="M7 11 V14 M10 10 H17 M10 13 H17 M10 16 H17" />
      </Svg>
      <span className="mt-[5px] text-[10px] leading-[18px] whitespace-nowrap [text-orientation:sideways] [writing-mode:vertical-rl]">
        オブジェクトのプロパティ
      </span>
    </button>
    <button type="button" aria-label="カスタマイズ" className="mt-[17px] flex justify-center">
      <Icon name="plus" className="size-[17px]" />
    </button>
  </div>
);

const palette = [
  '#231815', '#3e3a39', '#595757', '#727171', '#898989', '#9fa0a0', '#b5b5b6', '#c9caca', '#dcdddd', '#efefef', '#ffffff',
  '#1d2088', '#00a0e9', '#009944', '#fff100', '#e60012', '#e4007f', '#b04080', '#f08300', '#f5b0b0', '#88746a', '#d0cbe6',
  '#a698cb', '#7390c8', '#7969af', '#9283b0', '#4f6490', '#594f6e', '#7388a5', '#008cd9', '#9fd9f6', '#b6ccd9', '#96a8b1',
  '#717e86', '#4a525b', '#55736f', '#458a79', '#719796', '#56a899', '#58a46c', '#5cc2d0', '#50a8b5', '#b8ccbc', '#d6ebd8',
  '#a5d6ac', '#98a69a', '#98a57b', '#b9c56f', '#b8c999', '#aacf0a', '#d9e381', '#595545', '#888572', '#b3b09b',
];

const ColorPalette = () => (
  <aside className="flex w-[21px] shrink-0 flex-col items-center border-l border-[#d8d8d8] bg-[#f3f3f3]">
    <svg viewBox="0 0 16 6" className="mt-0.5 h-1.5 w-4 shrink-0" aria-hidden="true">
      <path d="M1 1.5 H16 M2.5 4.5 H15" stroke="#bbb" strokeDasharray="1 2" />
    </svg>
    <RightArrow className="mt-[5px]" />
    <svg viewBox="0 0 12 12" className="mt-2.5 size-3 shrink-0" stroke="#bbb" strokeWidth="2" aria-hidden="true">
      <path d="M1 11 L8 4 M6 2 L10 6 M8 4 L11 1" />
    </svg>
    <svg viewBox="0 0 10 6" className="mt-[9px] mb-[6px] h-1.5 w-2.5 shrink-0" fill="none" stroke="#bbb" strokeWidth="1.5" aria-hidden="true">
      <path d="M1 5 L5 1 L9 5" />
    </svg>
    <NoColor className="size-[18px]" />
    <div className="flex min-h-0 w-[18px] flex-1 flex-col overflow-hidden">
      {palette.map((color) => (
        <button
          key={color}
          type="button"
          aria-label={color}
          className="h-[17px] shrink-0 border border-t-0 border-[#595959]"
          style={{ backgroundColor: color }}
        />
      ))}
    </div>
    <svg viewBox="0 0 10 6" className="mt-1.5 h-1.5 w-2.5 shrink-0" fill="none" stroke="#aaa" strokeWidth="1.5" aria-hidden="true">
      <path d="M1 1 L5 5 L9 1" />
    </svg>
    <Chevron d="M1 2 L4 5 L1 8 M4.5 2 L7.5 5 L4.5 8" className="mt-2.5 mb-2.5 h-2.5 w-2" />
  </aside>
);

const NoFill = () => (
  <svg viewBox="0 0 22 21" className="h-[21px] w-[22px]" aria-hidden="true">
    <rect x="0.5" y="0.5" width="21" height="20" fill="#fff" stroke="#aaa" />
    <path d="M1 1 L21 20" stroke="#d8201c" strokeWidth="1.5" />
  </svg>
);

const StatusBar = () => (
  <footer className="flex h-[38px] shrink-0 items-center border-t border-[#d8d8d8] text-xs whitespace-nowrap">
    <span className="w-[130px] shrink-0 pl-[7px]">( 105.041, 54.39...</span>
    <RightArrow />
    <span className="ml-[29px] flex-1 whitespace-pre">1226 個のオブジェクトを選択 (レイヤ 1  上)</span>
    <Icon name="monitor" className="size-4" />
    <div className="ml-[17px] flex w-[198px] items-center">
      <Icon name="fill" />
      <NoFill />
      <span className="ml-1">塗りつぶし色</span>
    </div>
    <div className="flex w-[226px] items-center border-l border-[#d8d8d8] pl-2.5">
      <Icon name="nib" />
      <NoFill />
      <span className="ml-1">輪郭の色</span>
    </div>
  </footer>
);

export default function App() {
  return (
    <div className="flex h-screen flex-col overflow-hidden border border-[#acacac] bg-white pr-1 pb-1 pl-1 font-['Noto_Sans','Noto_Sans_CJK_JP',sans-serif] text-black [font-feature-settings:'palt']">
      <TitleBar />
      <div className="flex min-h-0 flex-1 flex-col bg-[#f3f3f3]">
        <MenuBar />
        <StandardBar />
        <PropertyBar />
        <div className="flex min-h-0 flex-1">
          <Toolbox />
          <DocumentArea />
          <div className="w-[5px] shrink-0 bg-white pl-0.5">
            <div className="h-full w-px bg-[#d3d3d3]" />
          </div>
          <PropertiesDocker />
          <div className="mt-5 w-px shrink-0 bg-[#00aaff]" />
          <DockerTabs />
          <ColorPalette />
        </div>
        <StatusBar />
      </div>
    </div>
  );
}
